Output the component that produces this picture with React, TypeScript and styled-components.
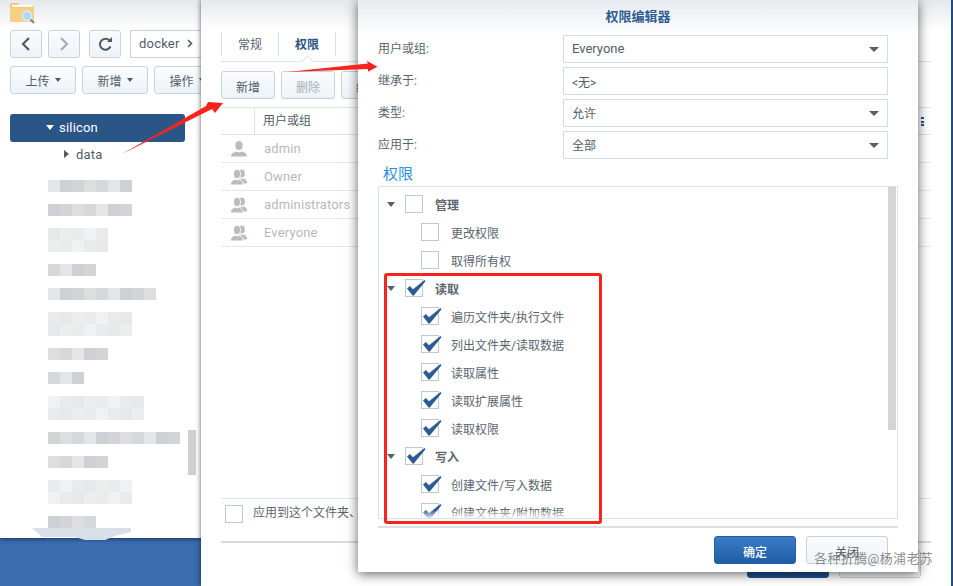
import React from "react";
import styled, { createGlobalStyle } from "styled-components";

const SANS = `Roboto, "Noto Sans CJK SC", sans-serif`;

const Global = createGlobalStyle`
  html, body { margin: 0; padding: 0; background: #3a6cae; overflow: hidden; }
  * { box-sizing: border-box; }
`;

const Desktop = styled.div`
  position: relative;
  width: 953px;
  height: 586px;
  overflow: hidden;
  background: #3a6cae;
  font-family: ${SANS};
  font-size: 12px;
  color: #525c68;
`;

const LeftWindow = styled.section`
  position: absolute;
  left: 0;
  top: 0;
  width: 201px;
  height: 538px;
  background: linear-gradient(#e5e8ec 0, #ffffff 30px);
  box-shadow: 0 1px 4px rgba(10, 30, 60, 0.75);
  padding: 3px 0 0 10px;
  display: flex;
  flex-direction: column;
`;

const FolderBox = styled.div`
  height: 21px;
  margin-bottom: 6px;
`;

const Bar = styled.div`
  display: flex;
  height: 28px;
  overflow: hidden;
`;

const Btn = styled.div<{ $w: number; $gap?: number; $disabled?: boolean; $low?: boolean }>`
  flex: none;
  width: ${(p) => p.$w}px;
  height: 28px;
  margin-right: ${(p) => p.$gap ?? 6}px;
  padding-top: ${(p) => (p.$low ? 3 : 0)}px;
  border: 1px solid #c6d2de;
  border-radius: 3px;
  background: linear-gradient(#fafcfe, #eef3f8);
  display: flex;
  align-items: center;
  justify-content: center;
  gap: 5px;
  color: ${(p) => (p.$disabled ? "#a9b0b8" : "#525c68")};
`;

const SmallCaret = styled.i`
  width: 0;
  height: 0;
  border-left: 3.5px solid transparent;
  border-right: 3.5px solid transparent;
  border-top: 4px solid #4f5a66;
`;

const Crumb = styled.div`
  flex: none;
  width: 80px;
  height: 28px;
  border: 1px solid #c6d2de;
  border-right: 0;
  background: #fff;
  padding: 0 0 1px 8px;
  display: flex;
  align-items: center;
  gap: 7px;
  font-size: 13px;
  letter-spacing: 0.2px;
`;

const ToolBar = styled(Bar)`
  margin-top: 8px;
`;

const Tree = styled.div`
  margin-top: 20px;
  width: 175px;
  font-size: 13px;
`;

const SelectedNode = styled.div`
  height: 28px;
  border-radius: 3px;
  background: #2a5587;
  color: #fff;
  display: flex;
  align-items: center;
  padding: 0 0 2px 36px;
  gap: 5px;
  letter-spacing: 0.2px;
`;

const DownWhite = styled.i`
  width: 0;
  height: 0;
  border-left: 4px solid transparent;
  border-right: 4px solid transparent;
  border-top: 5px solid #fff;
`;

const ChildNode = styled.div`
  height: 28px;
  display: flex;
  align-items: center;
  padding: 0 0 4px 54px;
  gap: 7px;
  letter-spacing: 0.2px;
`;

const RightCaret = styled.i`
  width: 0;
  height: 0;
  border-top: 4px solid transparent;
  border-bottom: 4px solid transparent;
  border-left: 5px solid #4f5a66;
`;

const Mosaic = styled.div`
  padding-left: 38px;
  margin-top: 10px;
  display: flex;
  flex-direction: column;
`;

const MosaicRow = styled.div<{ $top: number }>`
  display: flex;
  margin-top: ${(p) => p.$top}px;
`;

const Cell = styled.b<{ $c: string }>`
  width: 12px;
  height: 12px;
  background: ${(p) => p.$c};
`;

const Scroll = styled.div`
  position: absolute;
  left: 188px;
  top: 430px;
  width: 8px;
  height: 45px;
  background: #cdd0d3;
`;

const MiddleWindow = styled.section`
  position: absolute;
  left: 201px;
  top: 0;
  width: 750px;
  height: 586px;
  background: linear-gradient(#e5e8ec 0, #ffffff 30px);
  box-shadow: 0 0 5px rgba(0, 0, 0, 0.65);
  padding: 32px 20px 0;
  display: flex;
  flex-direction: column;
`;

const Tabs = styled.div`
  height: 30px;
  border-bottom: 1px solid #dde3ea;
  display: flex;
  align-items: flex-start;
  border-left: 0;
`;

const Tab = styled.div<{ $active?: boolean }>`
  position: relative;
  width: 57px;
  height: 24px;
  padding-bottom: 2px;
  display: flex;
  align-items: center;
  justify-content: center;
  border-left: 1px solid #d6dee7;
  font-weight: ${(p) => (p.$active ? 700 : 400)};
  color: ${(p) => (p.$active ? "#2a5587" : "#5b6570")};
  ${(p) =>
    p.$active
      ? `border-right: 1px solid #d6dee7;
         width: 58px;
         &::after {
           content: "";
           position: absolute;
           left: 24px;
           top: 25px;
           width: 8px;
           height: 8px;
           background: #fff;
           border-left: 1px solid #dde3ea;
           border-top: 1px solid #dde3ea;
           transform: rotate(45deg);
         }`
      : ""}
`;

const ActionBar = styled(Bar)`
  margin-top: 9px;
`;

const HeaderRow = styled.div`
  position: relative;
  margin-top: 8px;
  height: 28px;
  border-top: 1px solid #dde3ea;
  border-bottom: 1px solid #dde3ea;
  display: flex;
  align-items: center;
`;

const HeadCell = styled.div`
  margin-left: 33px;
  height: 26px;
  padding: 0 0 4px 8px;
  border-left: 1px solid #dde3ea;
  display: flex;
  align-items: center;
`;

const Dots = styled.span`
  position: absolute;
  right: 7px;
  top: 9px;
  width: 3px;
  height: 9px;
  background: repeating-linear-gradient(#2a5587 0 2px, transparent 2px 3.5px);
`;

const UserRow = styled.div`
  height: 28px;
  border-bottom: 1px solid #e4e9ee;
  display: flex;
  align-items: center;
  gap: 17px;
  padding-left: 10px;
  font-size: 13px;
  color: #b4b9be;
  letter-spacing: 0.15px;
`;

const Spacer = styled.div`
  flex: 1;
`;

const ApplyRow = styled.div`
  height: 43px;
  border-top: 1px solid #e2e8ee;
  display: flex;
  align-items: flex-start;
  padding: 6px 0 0 4px;
  color: #5b6570;
  line-height: 17px;
  white-space: nowrap;
  overflow: hidden;
`;

const ApplyText = styled.span`
  margin-left: -2px;
`;

const WindowFoot = styled.div`
  height: 45px;
  border-top: 2px solid #dadada;
  display: flex;
  justify-content: flex-end;
  align-items: flex-end;
  padding: 0 10px 8px 0;
  gap: 10px;
`;

const ActionBtn = styled.div<{ $primary?: boolean }>`
  width: 82px;
  height: 28px;
  border-radius: 3px;
  padding-top: 3px;
  display: flex;
  align-items: center;
  justify-content: center;
  border: 1px solid ${(p) => (p.$primary ? "#24609f" : "#c6d2de")};
  background: ${(p) =>
    p.$primary ? "linear-gradient(#3a7cc7, #1f5ea6)" : "linear-gradient(#fafcfe, #eef3f8)"};
  color: ${(p) => (p.$primary ? "#fff" : "#525c68")};
  font-weight: ${(p) => (p.$primary ? 500 : 400)};
`;

const BackBtn = styled(ActionBtn)`
  margin-bottom: 0;
  background: ${(p) => (p.$primary ? "#1e4f8c" : "#f4f6f8")};
`;

const RightStrip = styled.div`
  position: absolute;
  left: 951px;
  top: 0;
  width: 2px;
  height: 586px;
  background: #24497a;
`;

const Modal = styled.section`
  position: absolute;
  left: 358px;
  top: 0;
  width: 560px;
  height: 572px;
  background: #fff;
  box-shadow: 0 2px 11px rgba(0, 0, 0, 0.62);
  padding: 0 20px;
  display: flex;
  flex-direction: column;
`;

const ModalTitle = styled.header`
  flex: none;
  height: 35px;
  margin: 0 -20px;
  padding-bottom: 5px;
  background: linear-gradient(#e7ebef, #ffffff);
  display: flex;
  align-items: center;
  justify-content: center;
  font-size: 13px;
  font-weight: 700;
  color: #2f5d92;
`;

const FormRow = styled.div`
  flex: none;
  display: flex;
  align-items: center;
  height: 28px;
  margin-bottom: 4px;
  padding-right: 10px;
`;

const FormLabel = styled.label`
  width: 185px;
  flex: none;
  padding-bottom: 4px;
  color: #5b6570;
`;

const Field = styled.div<{ $latin?: boolean; $low?: boolean }>`
  flex: 1;
  height: 28px;
  border: 1.5px solid #d3dbe5;
  background: #fff;
  padding: ${(p) => (p.$low ? "1px" : "0")} 8px ${(p) => (p.$low ? "0" : "2px")};
  display: flex;
  align-items: center;
  justify-content: space-between;
  font-size: ${(p) => (p.$latin ? 13 : 12)}px;
`;

const SelectCaret = styled.i`
  width: 0;
  height: 0;
  margin-top: 2px;
  border-left: 5px solid transparent;
  border-right: 5px solid transparent;
  border-top: 5px solid #555f6b;
`;

const SectionTitle = styled.h3`
  flex: none;
  margin: -4px 0 0;
  height: 27px;
  padding: 5px 0 0 5px;
  font-size: 15px;
  line-height: 20px;
  font-weight: 400;
  color: #2a8fdc;
`;

const ListBox = styled.div`
  position: relative;
  flex: none;
  height: 333px;
  border: 1px solid #d9e1ea;
  padding-top: 3px;
  overflow: hidden;
`;

const ListScroll = styled.div`
  position: absolute;
  right: 1px;
  top: 0;
  width: 8px;
  height: 243px;
  background: #d3d5d7;
`;

const ListFade = styled.div`
  position: absolute;
  left: 0;
  right: 0;
  bottom: 0;
  height: 8px;
  background: linear-gradient(rgba(255, 255, 255, 0), rgba(255, 255, 255, 0.85));
`;

const PermRow = styled.div<{ $child?: boolean }>`
  height: 28px;
  display: flex;
  align-items: center;
  padding-left: ${(p) => (p.$child ? 42 : 8)}px;
  font-weight: ${(p) => (p.$child ? 400 : 700)};
  color: #5b6570;
`;

const GroupCaret = styled.i`
  flex: none;
  width: 0;
  height: 0;
  margin-right: 10px;
  border-left: 4px solid transparent;
  border-right: 4px solid transparent;
  border-top: 5px solid #555f6b;
`;

const Check = styled.span`
  position: relative;
  flex: none;
  display: block;
  width: 18px;
  height: 18px;
  margin-right: 12px;
  border: 1px solid #bcc8d6;
  background: #fff;
`;

const Tick = styled.svg`
  position: absolute;
  left: -1px;
  top: -1px;
  width: 22px;
  height: 18px;
  overflow: visible;
`;

const ModalRule = styled.div`
  flex: none;
  margin-top: 7px;
  height: 2px;
  background: #dcdfe2;
`;

const ModalFoot = styled.footer`
  flex: none;
  display: flex;
  justify-content: flex-end;
  gap: 10px;
  padding: 8px 10px 0 0;
`;

const RedFrame = styled.div`
  position: absolute;
  left: 384px;
  top: 273px;
  width: 218px;
  height: 251px;
  border: 3px solid #f8241c;
  border-radius: 3px;
`;

const Overlay = styled.svg`
  position: absolute;
  left: 0;
  top: 0;
  width: 953px;
  height: 586px;
  pointer-events: none;
`;

const Watermark = styled.div`
  position: absolute;
  left: 814px;
  top: 550px;
  font-size: 13px;
  line-height: 18px;
  letter-spacing: 0.4px;
  color: rgba(70, 70, 70, 0.62);
  white-space: nowrap;
`;

const NavIcon = ({ d, c }: { d: string; c: string }) => (
  <svg width="14" height="16" viewBox="0 0 14 16" fill="none" stroke={c} strokeWidth="2.2">
    <path d={d} />
  </svg>
);

const Folder = () => (
  <svg width="26" height="21" viewBox="0 0 26 21">
    <path d="M0 1.5 Q0 0 1.5 0H8l2 2h13q1 0 1 1v15H0z" fill="#efc779" />
    <rect x="2" y="1.8" width="21" height="2" fill="#fff" />
    <path d="M0 4.5h24V19H1q-1 0-1-1z" fill="#f3cf87" />
    <circle cx="17" cy="13" r="4.8" fill="#aeddf3" stroke="#e6eef2" strokeWidth="1.2" />
    <path d="M20.5 16.5l3.5 3.5" stroke="#7b8792" strokeWidth="2" />
  </svg>
);

const PersonIcon = () => (
  <svg width="16" height="16" viewBox="0 0 16 16" fill="#b9bdc1">
    <ellipse cx="8" cy="4.5" rx="3.6" ry="4.5" />
    <path d="M0 15.5c0-3.5 3-4 5.5-5 1 1 4 1 5 0 2.5 1 5.500 1.500 5.500 5z" />
  </svg>
);

const GroupIcon = () => (
  <svg width="16" height="16" viewBox="0 0 16 16" fill="#b9bdc1">
    <ellipse cx="10.800" cy="4.500" rx="3" ry="4" />
    <path d="M9 9.500c2 .6 3 .6 4 0 1.500.6 3 1.500 3 5h-3z" />
    <ellipse cx="6" cy="5" rx="3.500" ry="4.500" stroke="#fff" strokeWidth=".8" />
    <path d="M0 15.500c0-3.500 2.500-4 4-5 1 1 3 1 4 0 1.500 1 4 1.500 4 5z" />
  </svg>
);

const CheckBox = ({ on }: { on?: boolean }) => (
  <Check>
    {on && (
      <Tick viewBox="0 0 22 18">
        <path d="M2 9.500L5 7l3 3.200L19.500 1 20.500 2.200 8.800 16.500H7.500z" fill="#2d5b93" />
      </Tick>
    )}
  </Check>
);

const g = ["#e4e5e6", "#cdd1d5", "#d3d4d6", "#dcdee0", "#d6d9dc"];
const l = ["#f0f1f2", "#e9eaeb", "#e6e8e9", "#eceded", "#e9ebec"];
const pick = (arr: string[], n: number, seed: number) =>
  Array.from({ length: n }, (_, i) => arr[(i + seed) % arr.length]);

const mosaicRows: { top: number; n: number; set: string[] }[] = [
  { top: 0, n: 7, set: g },
  { top: 12, n: 7, set: g },
  { top: 12, n: 5, set: l },
  { top: 0, n: 5, set: l },
  { top: 12, n: 4, set: g },
  { top: 12, n: 9, set: g },
  { top: 12, n: 7, set: l },
  { top: 0, n: 7, set: l },
  { top: 12, n: 5, set: g },
  { top: 12, n: 3, set: g },
  { top: 12, n: 8, set: l },
  { top: 0, n: 8, set: l },
  { top: 12, n: 11, set: g },
  { top: 12, n: 5, set: g },
  { top: 12, n: 7, set: l },
  { top: 0, n: 7, set: l },
  { top: 12, n: 4, set: g },
];

const perms: { t: string; on: boolean; child?: boolean }[] = [
  { t: "管理", on: false },
  { t: "更改权限", on: false, child: true },
  { t: "取得所有权", on: false, child: true },
  { t: "读取", on: true },
  { t: "遍历文件夹/执行文件", on: true, child: true },
  { t: "列出文件夹/读取数据", on: true, child: true },
  { t: "读取属性", on: true, child: true },
  { t: "读取扩展属性", on: true, child: true },
  { t: "读取权限", on: true, child: true },
  { t: "写入", on: true },
  { t: "创建文件/写入数据", on: true, child: true },
  { t: "创建文件夹/附加数据", on: true, child: true },
];

const users = [
  { n: "admin", group: false },
  { n: "Owner", group: true },
  { n: "administrators", group: true },
  { n: "Everyone", group: true },
];

export default function App() {
  return (
    <Desktop>
      <Global />
      <LeftWindow>
        <FolderBox>
          <Folder />
        </FolderBox>
        <Bar>
          <Btn $w={32}>
            <NavIcon d="M10 2L4 8l6 6" c="#4f5a66" />
          </Btn>
          <Btn $w={32} $gap={9}>
            <NavIcon d="M4 2l6 6-6 6" c="#a5adb6" />
          </Btn>
          <Btn $w={32} $gap={9}>
            <svg width="15" height="15" viewBox="0 0 15 15" fill="none" stroke="#4f5a66" strokeWidth="2">
              <path d="M12.500 9.500A5.500 5.500 0 1 1 11.500 3.500" />
              <path d="M9 5h5V0z" fill="#4f5a66" stroke="none" />
            </svg>
          </Btn>
          <Crumb>
            docker
            <svg width="6" height="9" viewBox="0 0 6 9" fill="none" stroke="#4f5a66" strokeWidth="1.600">
              <path d="M1 1l3.500 3.500L1 8" />
            </svg>
          </Crumb>
        </Bar>
        <ToolBar>
          <Btn $w={66}>
            上传
            <SmallCaret />
          </Btn>
          <Btn $w={66}>
            新增
            <SmallCaret />
          </Btn>
          <Btn $w={66}>
            操作
            <SmallCaret />
          </Btn>
        </ToolBar>
        <Tree>
          <SelectedNode>
            <DownWhite />
            silicon
          </SelectedNode>
          <ChildNode>
            <RightCaret />
            data
          </ChildNode>
        </Tree>
        <Mosaic>
          {mosaicRows.map((r, i) => (
            <MosaicRow key={i} $top={r.top}>
              {pick(r.set, r.n, i).map((c, j) => (
                <Cell key={j} $c={c} />
              ))}
            </MosaicRow>
          ))}
        </Mosaic>
        <Scroll />
      </LeftWindow>

      <MiddleWindow>
        <Tabs>
          <Tab>常规</Tab>
          <Tab $active>权限</Tab>
        </Tabs>
        <ActionBar>
          <Btn $w={54} $low>
            新增
          </Btn>
          <Btn $w={54} $low $disabled>
            删除
          </Btn>
          <Btn $w={54} $low>
            编辑
          </Btn>
        </ActionBar>
        <HeaderRow>
          <HeadCell>用户或组</HeadCell>
          <Dots />
        </HeaderRow>
        {users.map((u) => (
          <UserRow key={u.n}>
            {u.group ? <GroupIcon /> : <PersonIcon />}
            {u.n}
          </UserRow>
        ))}
        <Spacer />
        <ApplyRow>
          <CheckBox />
          <ApplyText>应用到这个文件夹、子文件夹及文件</ApplyText>
        </ApplyRow>
        <WindowFoot>
          <BackBtn $primary>确定</BackBtn>
          <BackBtn>取消</BackBtn>
        </WindowFoot>
      </MiddleWindow>
      <RightStrip />

      <Modal>
        <ModalTitle>权限编辑器</ModalTitle>
        <FormRow>
          <FormLabel>用户或组:</FormLabel>
          <Field $latin>
            Everyone
            <SelectCaret />
          </Field>
        </FormRow>
        <FormRow>
          <FormLabel>继承于:</FormLabel>
          <Field $low>&lt;无&gt;</Field>
        </FormRow>
        <FormRow>
          <FormLabel>类型:</FormLabel>
          <Field>
            允许
            <SelectCaret />
          </Field>
        </FormRow>
        <FormRow>
          <FormLabel>应用于:</FormLabel>
          <Field>
            全部
            <SelectCaret />
          </Field>
        </FormRow>
        <SectionTitle>权限</SectionTitle>
        <ListBox>
          {perms.map((p) => (
            <PermRow key={p.t} $child={p.child}>
              {!p.child && <GroupCaret />}
              <CheckBox on={p.on} />
              {p.t}
            </PermRow>
          ))}
          <ListScroll />
          <ListFade />
        </ListBox>
        <ModalRule />
        <ModalFoot>
          <ActionBtn $primary>确定</ActionBtn>
          <ActionBtn>关闭</ActionBtn>
        </ModalFoot>
      </Modal>

      <RedFrame />
      <Overlay viewBox="0 0 953 586">
        <path d="M32 528H131V532L115 536 105 540H85L75 537H42L38 533z" fill="#d7dfe8" />
        <path d="M122 154L206 106 208 102 223 103 215 113 212 109z" fill="#f8241c" />
        <path d="M287 72L368 63.500 366.700 60.700 377.500 66.700 368 71.700 368 69z" fill="#f8241c" />
      </Overlay>
      <Watermark>各种折腾@杨浦老苏</Watermark>
    </Desktop>
  );
}
